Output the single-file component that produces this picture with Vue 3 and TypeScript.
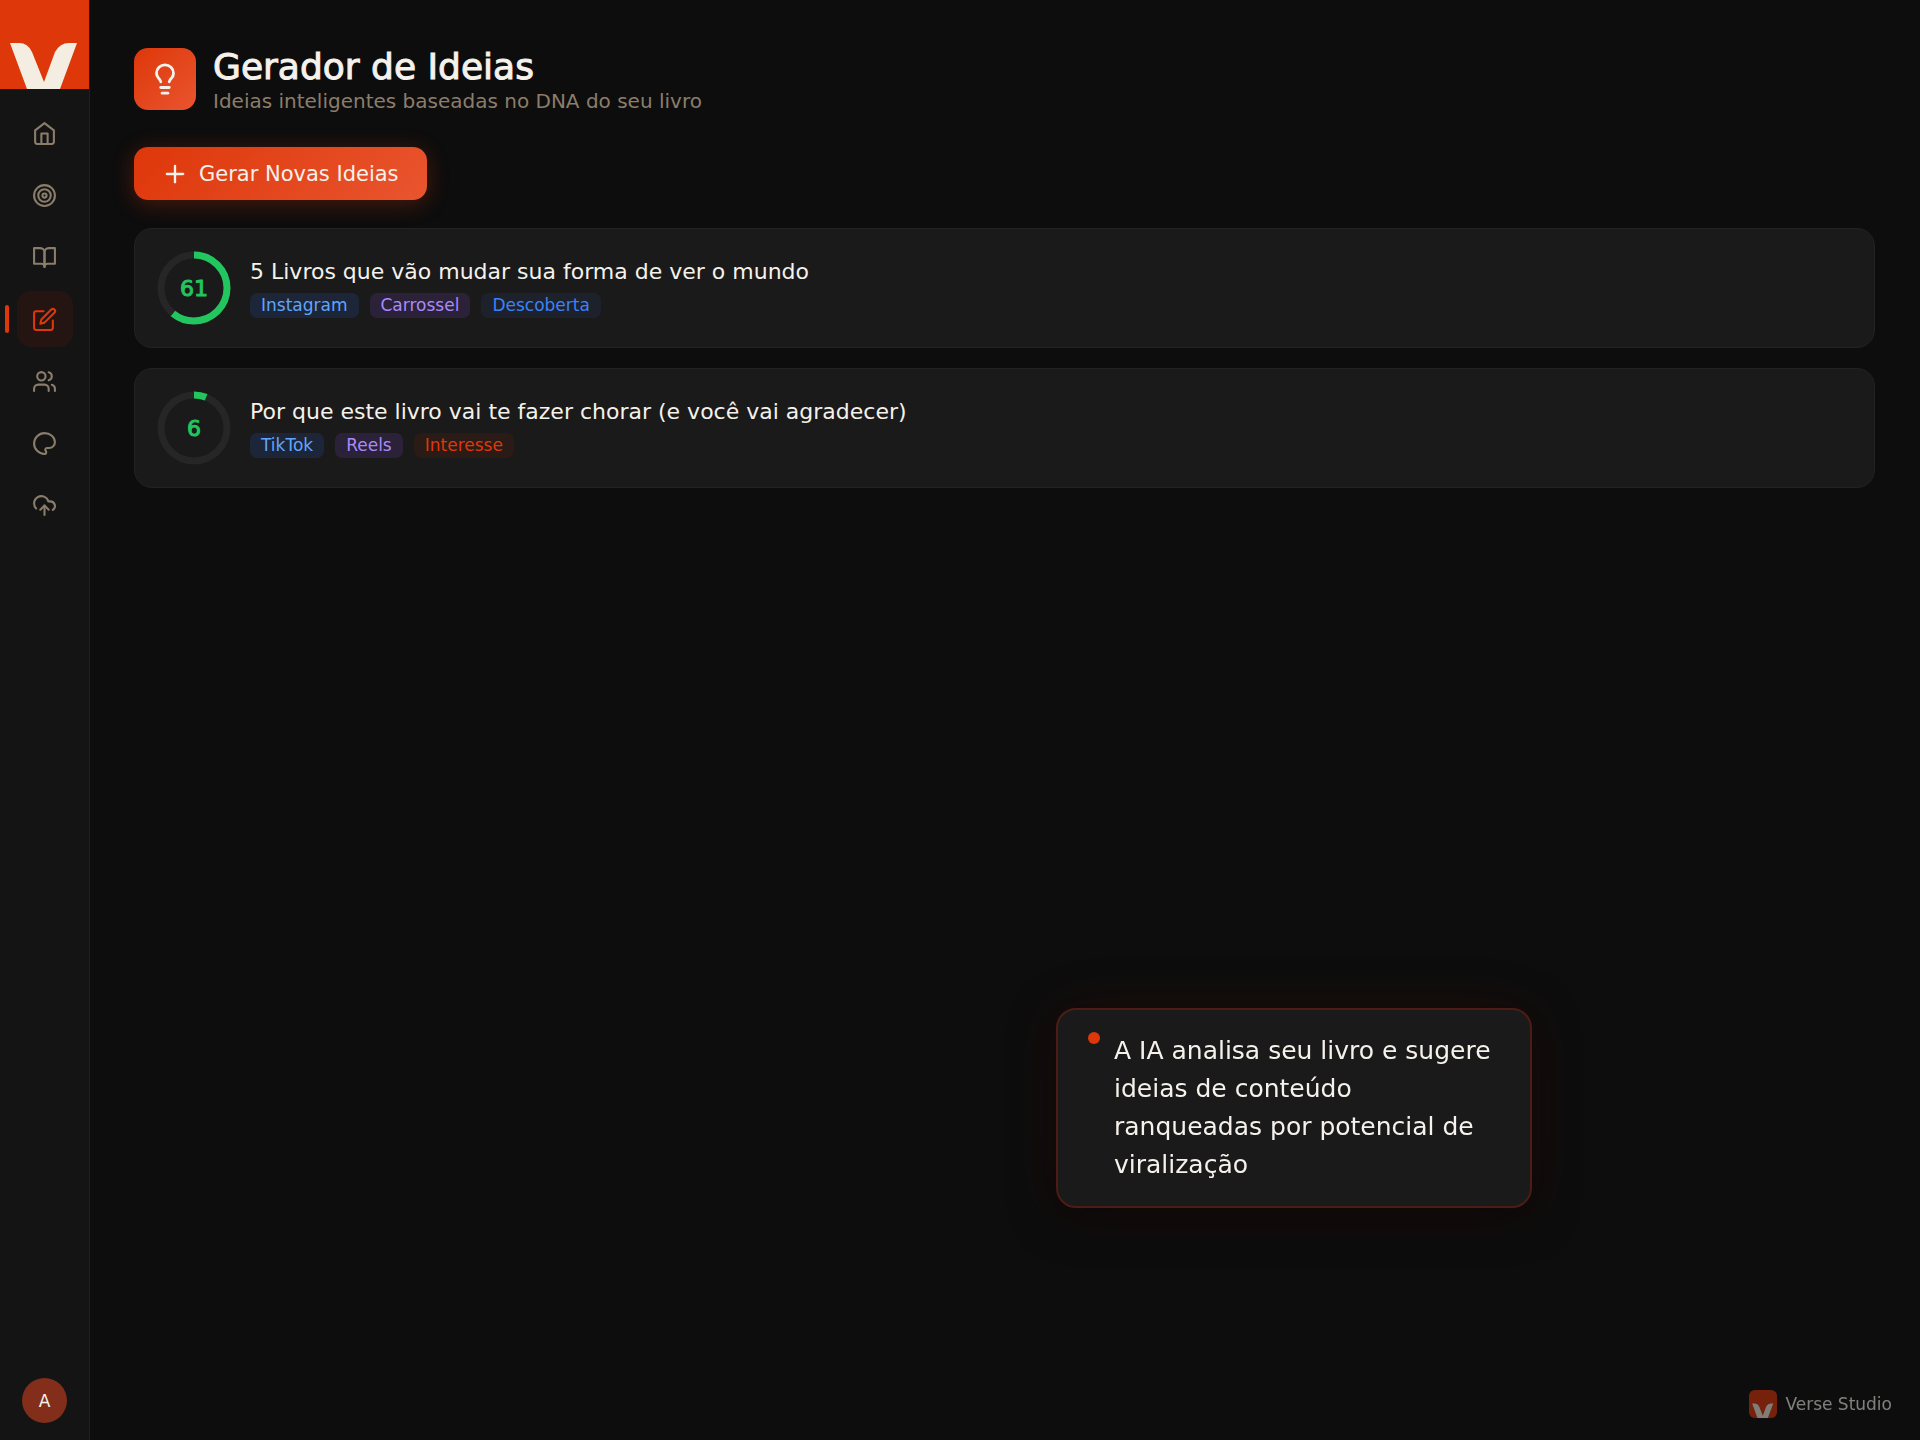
<script setup lang="ts">
interface NavItem {
  label: string
  shapes: string[]
}

interface Idea {
  score: number
  title: string
  platform: string
  format: string
  stage: string
  tone: 'blue' | 'ember'
}

const navItems: NavItem[] = [
  { label: 'Início', shapes: ['M3 9l9-7 9 7v11a2 2 0 0 1-2 2H5a2 2 0 0 1-2-2z', 'M9 22V12h6v10'] },
  {
    label: 'Estratégia',
    shapes: [
      'M2 12a10 10 0 1 0 20 0a10 10 0 1 0-20 0',
      'M6 12a6 6 0 1 0 12 0a6 6 0 1 0-12 0',
      'M10 12a2 2 0 1 0 4 0a2 2 0 1 0-4 0',
    ],
  },
  { label: 'Livros', shapes: ['M2 3h6a4 4 0 0 1 4 4v14a3 3 0 0 0-3-3H2z', 'M22 3h-6a4 4 0 0 0-4 4v14a3 3 0 0 1 3-3h7z'] },
  {
    label: 'Ideias',
    shapes: [
      'M11 4H4a2 2 0 0 0-2 2v14a2 2 0 0 0 2 2h14a2 2 0 0 0 2-2v-7',
      'M18.5 2.5a2.121 2.121 0 0 1 3 3L12 15l-4 1 1-4z',
    ],
  },
  {
    label: 'Público',
    shapes: [
      'M16 21v-2a4 4 0 0 0-4-4H6a4 4 0 0 0-4 4v2',
      'M5 7a4 4 0 1 0 8 0a4 4 0 1 0-8 0',
      'M22 21v-2a4 4 0 0 0-3-3.87',
      'M16 3.13a4 4 0 0 1 0 7.75',
    ],
  },
  {
    label: 'Marca',
    shapes: [
      'M12 2C6.5 2 2 6.5 2 12s4.5 10 10 10c.926 0 1.648-.746 1.648-1.688 0-.437-.18-.835-.437-1.125-.29-.289-.438-.652-.438-1.125a1.64 1.64 0 0 1 1.668-1.668h1.996c3.051 0 5.555-2.503 5.555-5.554C21.965 6.012 17.461 2 12 2z',
    ],
  },
  {
    label: 'Publicar',
    shapes: ['M4 14.899A7 7 0 1 1 15.71 8h1.79a4.5 4.5 0 0 1 2.5 8.242', 'M12 12v9', 'M16 16l-4-4-4 4'],
  },
]
const activeIndex = 3

const ideas: Idea[] = [
  {
    score: 61,
    title: '5 Livros que vão mudar sua forma de ver o mundo',
    platform: 'Instagram',
    format: 'Carrossel',
    stage: 'Descoberta',
    tone: 'blue',
  },
  {
    score: 6,
    title: 'Por que este livro vai te fazer chorar (e você vai agradecer)',
    platform: 'TikTok',
    format: 'Reels',
    stage: 'Interesse',
    tone: 'ember',
  },
]
</script>

<template>
  <div class="app">
    <aside class="sidebar">
      <svg class="logo" viewBox="0 0 89 89" role="img" aria-label="Verse Studio">
        <rect width="89" height="89" fill="#de370a" />
        <path d="M10 43H19Q28 43 32 52L44 82L55 52Q60 43 69 43H77L60 89H27Z" fill="#f3eee1" />
      </svg>
      <nav class="nav">
        <a
          v-for="(item, i) in navItems"
          :key="item.label"
          href="#"
          class="nav-item"
          :class="{ active: i === activeIndex }"
          :aria-label="item.label"
        >
          <svg class="icon" viewBox="0 0 24 24"><path v-for="d in item.shapes" :key="d" :d="d" /></svg>
        </a>
      </nav>
      <button class="avatar" type="button">A</button>
    </aside>

    <main class="main">
      <header class="header">
        <div class="header-icon">
          <svg class="icon" viewBox="0 0 24 24">
            <path d="M15 14c.2-1 .7-1.7 1.5-2.5 1-.9 1.5-2.2 1.5-3.5A6 6 0 0 0 6 8c0 1 .2 2.2 1.5 3.5.7.7 1.3 1.5 1.5 2.5" />
            <path d="M9 18h6" />
            <path d="M10 22h4" />
          </svg>
        </div>
        <div>
          <h1>Gerador de Ideias</h1>
          <p class="subtitle">Ideias inteligentes baseadas no DNA do seu livro</p>
        </div>
      </header>

      <button class="generate" type="button">
        <svg class="icon" viewBox="0 0 24 24"><path d="M5 12h14" /><path d="M12 5v14" /></svg>
        <span>Gerar Novas Ideias</span>
      </button>

      <section class="ideas">
        <article v-for="idea in ideas" :key="idea.title" class="card">
          <div class="ring">
            <svg viewBox="0 0 72 72">
              <circle class="track" cx="36" cy="36" r="33" />
              <circle
                class="value"
                cx="36"
                cy="36"
                r="33"
                pathLength="100"
                :stroke-dasharray="`${idea.score} 100`"
                transform="rotate(-90 36 36)"
              />
            </svg>
            <span class="score">{{ idea.score }}</span>
          </div>
          <div class="card-body">
            <h2>{{ idea.title }}</h2>
            <div class="tags">
              <span class="tag platform">{{ idea.platform }}</span>
              <span class="tag format">{{ idea.format }}</span>
              <span class="tag" :class="idea.tone">{{ idea.stage }}</span>
            </div>
          </div>
        </article>
      </section>
    </main>

    <div class="callout" role="status">
      <span class="dot"></span>
      <p>A IA analisa seu livro e sugere ideias de conteúdo ranqueadas por potencial de viralização</p>
    </div>

    <div class="watermark">
      <svg viewBox="0 0 89 89">
        <rect width="89" height="89" rx="18" fill="#de370a" />
        <path d="M10 43H19Q28 43 32 52L44 82L55 52Q60 43 69 43H77L60 89H27Z" fill="#f3eee1" />
      </svg>
      <span>Verse Studio</span>
    </div>
  </div>
</template>

<style>
body {
  margin: 0;
  background: #0d0d0d;
}
</style>

<style scoped>
.app {
  display: flex;
  min-height: 100vh;
  background: #0d0d0d;
  color: #f5f1eb;
  font-family: "DejaVu Sans", sans-serif;
}

h1,
h2,
p {
  margin: 0;
}

button {
  border: 0;
  padding: 0;
  font-family: inherit;
  cursor: pointer;
}

.icon {
  display: block;
  fill: none;
  stroke: currentColor;
  stroke-width: 2;
  stroke-linecap: round;
  stroke-linejoin: round;
}

.sidebar {
  box-sizing: border-box;
  display: flex;
  flex: none;
  flex-direction: column;
  align-items: center;
  width: 90px;
  padding-bottom: 17px;
  border-right: 1px solid #1f1f1f;
  background: #141414;
}

.logo {
  display: block;
  width: 89px;
  height: 89px;
}

.nav {
  display: flex;
  flex: 1;
  flex-direction: column;
  gap: 6px;
  padding-top: 16px;
}

.nav-item {
  position: relative;
  display: flex;
  align-items: center;
  justify-content: center;
  width: 56px;
  height: 56px;
  border-radius: 14px;
  color: #8b7d6b;
}

.nav-item .icon {
  width: 25px;
  height: 25px;
}

.nav-item.active {
  background: #241512;
  color: #de370a;
}

.nav-item.active::before {
  content: "";
  position: absolute;
  top: 14px;
  left: -12px;
  width: 4px;
  height: 28px;
  border-radius: 2px;
  background: #de370a;
}

.avatar {
  width: 45px;
  height: 45px;
  border-radius: 50%;
  background: #822e1b;
  color: #f5f1eb;
  font-size: 17px;
}

.main {
  flex: 1;
  min-width: 0;
  padding: 45px 45px 45px 44px;
}

.header {
  display: flex;
  align-items: center;
  gap: 17px;
}

.header-icon {
  display: flex;
  align-items: center;
  justify-content: center;
  width: 62px;
  height: 62px;
  border-radius: 14px;
  background: linear-gradient(135deg, #de370a, #e9552f);
}

.header-icon .icon {
  width: 34px;
  height: 34px;
}

h1 {
  font-size: 36px;
  font-weight: 400;
  line-height: 44px;
  -webkit-text-stroke: 1px currentColor;
}

.subtitle {
  color: #8b7d6b;
  font-size: 20px;
  line-height: 24px;
}

.generate {
  display: flex;
  align-items: center;
  gap: 10px;
  margin-top: 34px;
  padding: 0 28px 0 27px;
  height: 53px;
  border-radius: 14px;
  background: linear-gradient(135deg, #de370a, #e9552f);
  box-shadow: 0 4px 22px rgba(222, 55, 10, 0.3);
  color: #f5f1eb;
  font-size: 21px;
}

.generate .icon {
  width: 28px;
  height: 28px;
}

.ideas {
  display: flex;
  flex-direction: column;
  gap: 20px;
  margin-top: 28px;
}

.card {
  display: flex;
  align-items: center;
  gap: 20px;
  padding: 23px;
  border: 1px solid #222222;
  border-radius: 18px;
  background: #1a1a1a;
}

.ring {
  position: relative;
  width: 72px;
  height: 72px;
}

.ring svg {
  display: block;
  overflow: visible;
  width: 72px;
  height: 72px;
}

.ring circle {
  fill: none;
  stroke-width: 7;
}

.track {
  stroke: #262626;
}

.value {
  stroke: #22c55e;
}

.score {
  position: absolute;
  inset: 0;
  display: flex;
  align-items: center;
  justify-content: center;
  color: #22c55e;
  font-size: 22px;
  -webkit-text-stroke: 1px currentColor;
}

.card-body {
  display: flex;
  flex-direction: column;
  gap: 7px;
}

h2 {
  font-size: 22px;
  font-weight: 400;
  line-height: 28px;
}

.tags {
  display: flex;
  gap: 11px;
}

.tag {
  padding: 0 11px;
  border-radius: 7px;
  font-size: 17px;
  line-height: 25px;
}

.platform {
  background: #1c2638;
  color: #60a5fa;
}

.format {
  background: #2b2138;
  color: #a78bfa;
}

.blue {
  background: #1c212b;
  color: #3b82f6;
}

.ember {
  background: #2b1b17;
  color: #de370a;
}

.callout {
  position: fixed;
  top: 70%;
  left: 55%;
  box-sizing: border-box;
  display: flex;
  gap: 14px;
  width: 476px;
  padding: 22px 30px;
  border: 2px solid #4d1d15;
  border-radius: 20px;
  background: #1a1a1a;
  box-shadow: 0 8px 44px rgba(0, 0, 0, 0.5), 0 0 60px rgba(222, 55, 10, 0.1);
  font-size: 25px;
  line-height: 38px;
}

.dot {
  flex: none;
  width: 12px;
  height: 12px;
  border-radius: 50%;
  background: #de370a;
}

.watermark {
  position: fixed;
  right: 28px;
  bottom: 22px;
  display: flex;
  align-items: center;
  gap: 8px;
  opacity: 0.5;
  font-size: 17px;
}

.watermark svg {
  width: 28px;
  height: 28px;
}
</style>
